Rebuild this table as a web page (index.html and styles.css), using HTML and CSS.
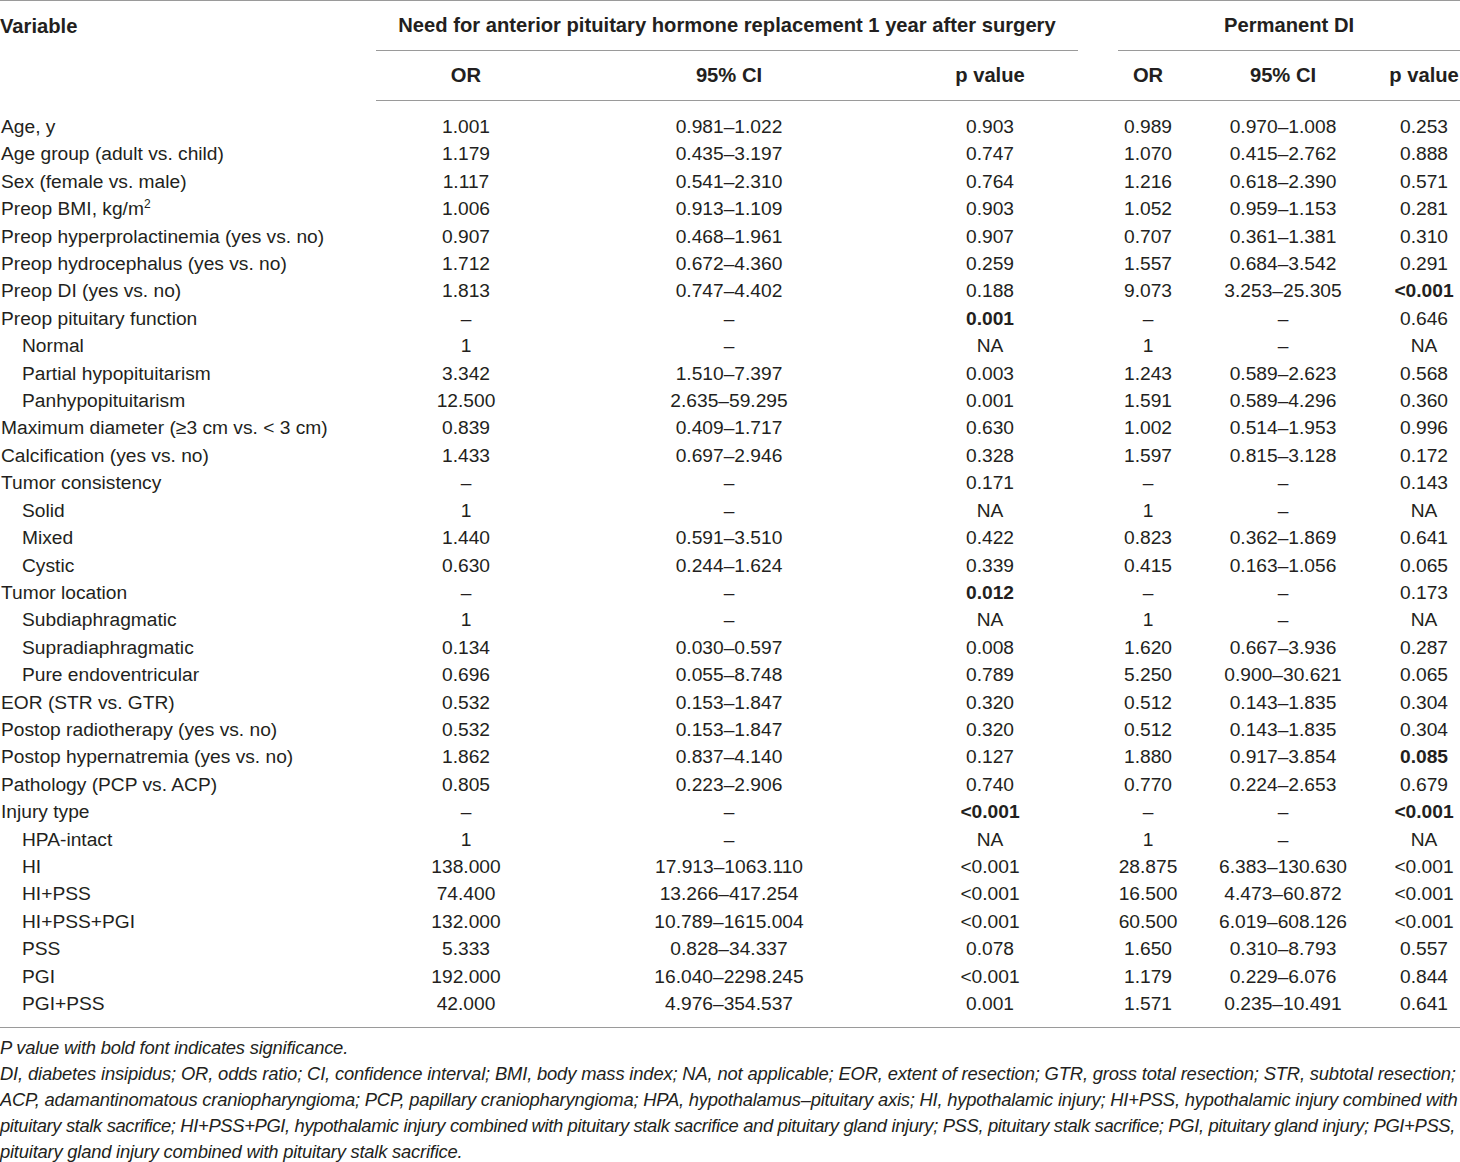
FILE: index.html
```html
<!DOCTYPE html>
<html>
<head>
<meta charset="utf-8">
<link rel="stylesheet" href="styles.css">
</head>
<body>
<table class="tbl">
<colgroup>
<col class="c-var"><col class="c-or"><col class="c-ci"><col class="c-p"><col class="c-gap"><col class="c-or2"><col class="c-ci2"><col class="c-p2">
</colgroup>
<thead>
<tr class="h1">
<th rowspan="2" class="var-h">Variable</th>
<th colspan="3" class="span-h">Need for anterior pituitary hormone replacement 1 year after surgery</th>
<th class="gap"></th>
<th colspan="3" class="span-h">Permanent DI</th>
</tr>
<tr class="h2">
<th>OR</th><th>95% CI</th><th>p value</th><th class="gap"></th><th>OR</th><th>95% CI</th><th>p value</th>
</tr>
</thead>
<tbody>
<tr class="first"><td>Age, y</td><td>1.001</td><td>0.981–1.022</td><td>0.903</td><td></td><td>0.989</td><td>0.970–1.008</td><td>0.253</td></tr>
<tr><td>Age group (adult vs. child)</td><td>1.179</td><td>0.435–3.197</td><td>0.747</td><td></td><td>1.070</td><td>0.415–2.762</td><td>0.888</td></tr>
<tr><td>Sex (female vs. male)</td><td>1.117</td><td>0.541–2.310</td><td>0.764</td><td></td><td>1.216</td><td>0.618–2.390</td><td>0.571</td></tr>
<tr><td>Preop BMI, kg/m<sup>2</sup></td><td>1.006</td><td>0.913–1.109</td><td>0.903</td><td></td><td>1.052</td><td>0.959–1.153</td><td>0.281</td></tr>
<tr><td>Preop hyperprolactinemia (yes vs. no)</td><td>0.907</td><td>0.468–1.961</td><td>0.907</td><td></td><td>0.707</td><td>0.361–1.381</td><td>0.310</td></tr>
<tr><td>Preop hydrocephalus (yes vs. no)</td><td>1.712</td><td>0.672–4.360</td><td>0.259</td><td></td><td>1.557</td><td>0.684–3.542</td><td>0.291</td></tr>
<tr><td>Preop DI (yes vs. no)</td><td>1.813</td><td>0.747–4.402</td><td>0.188</td><td></td><td>9.073</td><td>3.253–25.305</td><td class="b">&lt;0.001</td></tr>
<tr><td>Preop pituitary function</td><td>–</td><td>–</td><td class="b">0.001</td><td></td><td>–</td><td>–</td><td>0.646</td></tr>
<tr><td class="ind">Normal</td><td>1</td><td>–</td><td>NA</td><td></td><td>1</td><td>–</td><td>NA</td></tr>
<tr><td class="ind">Partial hypopituitarism</td><td>3.342</td><td>1.510–7.397</td><td>0.003</td><td></td><td>1.243</td><td>0.589–2.623</td><td>0.568</td></tr>
<tr><td class="ind">Panhypopituitarism</td><td>12.500</td><td>2.635–59.295</td><td>0.001</td><td></td><td>1.591</td><td>0.589–4.296</td><td>0.360</td></tr>
<tr><td>Maximum diameter (≥3 cm vs. &lt; 3 cm)</td><td>0.839</td><td>0.409–1.717</td><td>0.630</td><td></td><td>1.002</td><td>0.514–1.953</td><td>0.996</td></tr>
<tr><td>Calcification (yes vs. no)</td><td>1.433</td><td>0.697–2.946</td><td>0.328</td><td></td><td>1.597</td><td>0.815–3.128</td><td>0.172</td></tr>
<tr><td>Tumor consistency</td><td>–</td><td>–</td><td>0.171</td><td></td><td>–</td><td>–</td><td>0.143</td></tr>
<tr><td class="ind">Solid</td><td>1</td><td>–</td><td>NA</td><td></td><td>1</td><td>–</td><td>NA</td></tr>
<tr><td class="ind">Mixed</td><td>1.440</td><td>0.591–3.510</td><td>0.422</td><td></td><td>0.823</td><td>0.362–1.869</td><td>0.641</td></tr>
<tr><td class="ind">Cystic</td><td>0.630</td><td>0.244–1.624</td><td>0.339</td><td></td><td>0.415</td><td>0.163–1.056</td><td>0.065</td></tr>
<tr><td>Tumor location</td><td>–</td><td>–</td><td class="b">0.012</td><td></td><td>–</td><td>–</td><td>0.173</td></tr>
<tr><td class="ind">Subdiaphragmatic</td><td>1</td><td>–</td><td>NA</td><td></td><td>1</td><td>–</td><td>NA</td></tr>
<tr><td class="ind">Supradiaphragmatic</td><td>0.134</td><td>0.030–0.597</td><td>0.008</td><td></td><td>1.620</td><td>0.667–3.936</td><td>0.287</td></tr>
<tr><td class="ind">Pure endoventricular</td><td>0.696</td><td>0.055–8.748</td><td>0.789</td><td></td><td>5.250</td><td>0.900–30.621</td><td>0.065</td></tr>
<tr><td>EOR (STR vs. GTR)</td><td>0.532</td><td>0.153–1.847</td><td>0.320</td><td></td><td>0.512</td><td>0.143–1.835</td><td>0.304</td></tr>
<tr><td>Postop radiotherapy (yes vs. no)</td><td>0.532</td><td>0.153–1.847</td><td>0.320</td><td></td><td>0.512</td><td>0.143–1.835</td><td>0.304</td></tr>
<tr><td>Postop hypernatremia (yes vs. no)</td><td>1.862</td><td>0.837–4.140</td><td>0.127</td><td></td><td>1.880</td><td>0.917–3.854</td><td class="b">0.085</td></tr>
<tr><td>Pathology (PCP vs. ACP)</td><td>0.805</td><td>0.223–2.906</td><td>0.740</td><td></td><td>0.770</td><td>0.224–2.653</td><td>0.679</td></tr>
<tr><td>Injury type</td><td>–</td><td>–</td><td class="b">&lt;0.001</td><td></td><td>–</td><td>–</td><td class="b">&lt;0.001</td></tr>
<tr><td class="ind">HPA-intact</td><td>1</td><td>–</td><td>NA</td><td></td><td>1</td><td>–</td><td>NA</td></tr>
<tr><td class="ind">HI</td><td>138.000</td><td>17.913–1063.110</td><td>&lt;0.001</td><td></td><td>28.875</td><td>6.383–130.630</td><td>&lt;0.001</td></tr>
<tr><td class="ind">HI+PSS</td><td>74.400</td><td>13.266–417.254</td><td>&lt;0.001</td><td></td><td>16.500</td><td>4.473–60.872</td><td>&lt;0.001</td></tr>
<tr><td class="ind">HI+PSS+PGI</td><td>132.000</td><td>10.789–1615.004</td><td>&lt;0.001</td><td></td><td>60.500</td><td>6.019–608.126</td><td>&lt;0.001</td></tr>
<tr><td class="ind">PSS</td><td>5.333</td><td>0.828–34.337</td><td>0.078</td><td></td><td>1.650</td><td>0.310–8.793</td><td>0.557</td></tr>
<tr><td class="ind">PGI</td><td>192.000</td><td>16.040–2298.245</td><td>&lt;0.001</td><td></td><td>1.179</td><td>0.229–6.076</td><td>0.844</td></tr>
<tr class="last"><td class="ind">PGI+PSS</td><td>42.000</td><td>4.976–354.537</td><td>0.001</td><td></td><td>1.571</td><td>0.235–10.491</td><td>0.641</td></tr>
</tbody>
</table>
<div class="notes">
<p>P value with bold font indicates significance.</p>
<p><span class="ln ln1">DI, diabetes insipidus; OR, odds ratio; CI, confidence interval; BMI, body mass index; NA, not applicable; EOR, extent of resection; GTR, gross total resection; STR, subtotal resection;</span>
<span class="ln ln2">ACP, adamantinomatous craniopharyngioma; PCP, papillary craniopharyngioma; HPA, hypothalamus–pituitary axis; HI, hypothalamic injury; HI+PSS, hypothalamic injury combined with</span>
<span class="ln ln3">pituitary stalk sacrifice; HI+PSS+PGI, hypothalamic injury combined with pituitary stalk sacrifice and pituitary gland injury; PSS, pituitary stalk sacrifice; PGI, pituitary gland injury; PGI+PSS,</span>
<span class="ln ln4">pituitary gland injury combined with pituitary stalk sacrifice.</span></p>
</div>
</body>
</html>
```
FILE: styles.css
```css
html, body {
  margin: 0;
  padding: 0;
  background: #ffffff;
}
body {
  font-family: "Liberation Sans", Arial, sans-serif;
  color: #231f20;
  font-size: 19.2px;
  width: 1460px;
}
.tbl {
  width: 1460px;
  border-collapse: collapse;
  table-layout: fixed;
  border-top: 1px solid #9a9a9a;
  border-bottom: 1px solid #9a9a9a;
}
.c-var { width: 376px; }
.c-or { width: 180px; }
.c-ci { width: 346px; }
.c-p { width: 176px; }
.c-gap { width: 40px; }
.c-or2 { width: 60px; }
.c-ci2 { width: 210px; }
.c-p2 { width: 72px; }
th, td {
  padding: 0;
  white-space: nowrap;
  text-align: center;
  font-weight: normal;
}
th {
  font-weight: bold;
  font-size: 20.2px;
}
.h1 th {
  height: 49px;
  vertical-align: middle;
}
.h1 .var-h {
  text-align: left;
  vertical-align: top;
  padding-top: 14px;
  padding-left: 0;
}
.h1 .span-h {
  border-bottom: 1px solid #9a9a9a;
}
.h1 .gap {
  border-bottom: none;
}
.h2 th {
  height: 49px;
  border-bottom: 1px solid #9a9a9a;
}
tbody td {
  height: 27.4px;
  line-height: 27.4px;
}
tbody td:first-child {
  text-align: left;
  padding-left: 1px;
}
tbody td.ind {
  padding-left: 22px;
}
tbody tr.first td {
  padding-top: 12px;
}
tbody tr.last td {
  padding-bottom: 10px;
}
.b {
  font-weight: bold;
}
sup {
  font-size: 12px;
  line-height: 0;
  vertical-align: 7px;
}
.notes {
  font-style: italic;
  font-size: 18.4px;
  letter-spacing: -0.22px;
  line-height: 26px;
  padding-top: 7px;
}
.notes p {
  margin: 0;
  white-space: nowrap;
}
.ln {
  display: block;
}
.ln1 {
  letter-spacing: -0.17px;
}
.ln3 {
  letter-spacing: -0.36px;
}
```
